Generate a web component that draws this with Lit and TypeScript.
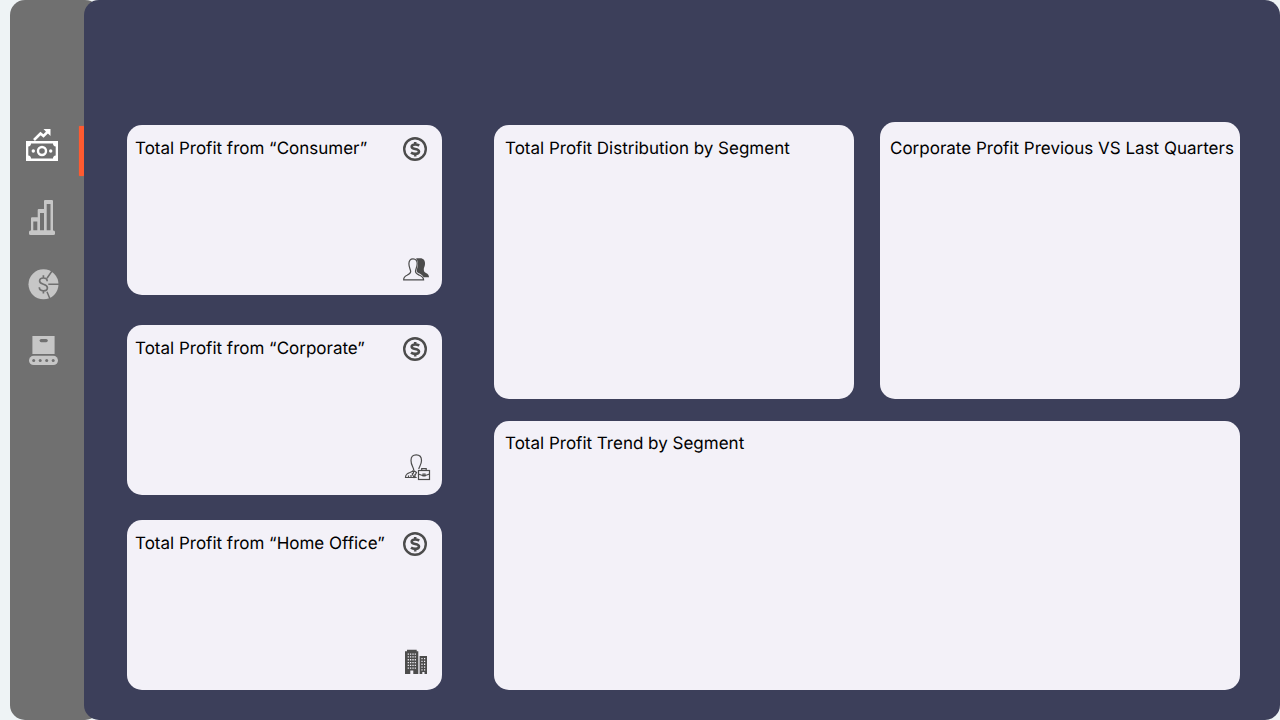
import { LitElement, html, svg, css } from "lit";
import { customElement, property } from "lit/decorators.js";

const money = svg`
  <path d="M9 13 L15.5 6.5 L18.5 9 L23 4.500" fill="none" stroke="currentColor" stroke-width="2.600"/>
  <path d="M18.500 2H25.500V9L23.200 6.800L20.800 4.400Z" fill="currentColor"/>
  <path fill-rule="evenodd" fill="currentColor" d="M1 14H33V34H1ZM6 16.500A3 3 0 0 1 3.300 19.500V28.500A3 3 0 0 1 6 31.500H28A3 3 0 0 1 30.700 28.500V19.500A3 3 0 0 1 28 16.500Z"/>
  <circle cx="17" cy="24" r="4" fill="none" stroke="currentColor" stroke-width="2.400"/>
  <circle cx="8.300" cy="24" r="1.700" fill="currentColor"/><circle cx="25.700" cy="24" r="1.700" fill="currentColor"/>`;

const bars = svg`
  <path fill="currentColor" fill-rule="evenodd" d="M6 32V19.300a1 1 0 0 1 1-1H12.700V11a1 1 0 0 1 1-1H19V2a1 1 0 0 1 1-1H27a1 1 0 0 1 1 1V32ZM8.300 31.500H12.300V22.500H8.300ZM15 31.500H19V14H15ZM21.700 31.500H25.500V5H21.700Z"/>
  <rect x="4" y="31.500" width="26" height="4.500" rx="1.500" fill="currentColor"/>`;

const pie = svg`
  <circle cx="18.500" cy="19.300" r="15" fill="currentColor"/>
  <g fill="none" stroke="#707070" stroke-width="1.500">
    <path d="M22 13.200L27 6M23.300 19.300H34M22 26.800L25 34"/>
    <path stroke-width="1.700" d="M22.200 16.300C22.200 13.800 20.500 13 18.400 13C16.200 13 14.600 14.200 14.600 16C14.600 20.300 22.400 18.200 22.400 22.700C22.400 24.700 20.600 25.800 18.400 25.800C16 25.800 14.400 24.700 14.300 22.300M18.400 10.300V13M18.400 25.800V28.500"/>
  </g>`;

const conveyor = svg`
  <rect x="7.400" y="5" width="22.200" height="18" fill="currentColor"/>
  <rect x="14.600" y="8" width="8.200" height="3.200" rx="1.600" fill="#707070"/>
  <rect x="4" y="24.800" width="29" height="9.200" rx="4.600" fill="currentColor"/>
  <g fill="#707070"><circle cx="8.700" cy="29.400" r="1.500"/><circle cx="15.200" cy="29.400" r="1.500"/><circle cx="21.700" cy="29.400" r="1.500"/><circle cx="28.200" cy="29.400" r="1.500"/></g>`;

const coin = svg`
  <g fill="none" stroke="currentColor">
    <circle cx="13" cy="14" r="10.800" stroke-width="2.400"/>
    <path stroke-width="2.600" d="M17.200 10.600C16 9.700 14.500 9.500 13.200 9.500C11 9.500 9.700 10.400 9.700 11.800C9.700 15 17 13 17 16.500C17 18.200 15.300 18.900 13.200 18.900C11.500 18.900 10.200 18.500 9 17.700M13.200 7V9.700M13.200 18.700V21.500"/>
  </g>`;

const people = svg`
  <path fill="currentColor" d="M13.800 3.700C15.500 3 17 3.300 18.200 3.300C21.500 3.300 23.300 5.700 23 9C22.900 11 22 12.500 21.800 14C21.700 16 22.200 17 24 18C26 19 27 20.500 27 22.300H21.500C20.500 19.500 17 18.500 15.300 17.300C14 16 15.500 13 16 10C16.200 7 15.500 5 13.800 3.700Z"/>
  <path fill="none" stroke="currentColor" stroke-width="1.200" d="M1.700 24.800C1.600 22.500 2.500 21.300 5 20.200C7.500 19 8.800 18.300 8.700 16.500C8.600 14.500 6.900 12.500 6.900 8.800C6.900 5.500 8.500 3.800 11 3.800C13.800 3.800 15.300 5.600 15.200 8.800C15.100 12.300 13.500 14.300 13.500 16.500C13.500 18.500 15 19 17.500 20.200C20.500 21.500 21.500 22.500 21.600 24.800Z"/>`;

const businessman = svg`
  <g fill="none" stroke="currentColor" stroke-width="1.200">
    <path d="M11.700 15.200C11.700 12.500 9 10.500 9 5.500C9 1.500 11 -.200 14.200 -.200C17.400 -.200 19.500 1.500 19.500 5.500C19.500 10 17 11.500 16.800 14"/>
    <path d="M11.500 15.500C9.500 17.500 6 17.500 4.500 19.500C3.700 20.500 3.500 21.500 3.500 22.500H14.700M11.500 15.500V18L10.200 19L12 22.300L14.500 17.500L12 15.800M6.500 22V20.500M9 20V22M13 19V22.500"/>
    <rect x="16.500" y="15.500" width="11" height="9"/>
    <path d="M19.700 15.500V13.600H24.200V15.500M16.300 19L20.500 20.500H23.500L27.500 19M21 19H23V21H21Z"/>
  </g>`;

const offices = svg`
  <path fill="currentColor" d="M3 24V1.300H5V-.300H14.700V1.300H16.300V24H11.300V20.500H8.300V24ZM17.600 24V6H25V24H22.500V22H20.300V24Z"/>
  <g stroke="#f3f1f8" fill="none" stroke-dasharray="1.300 1.500">
    <path stroke-width="1.200" d="M6.300 3.500V19M13.300 3.500V19M20 8V21M22.600 8V21"/>
    <path stroke-width="1.300" d="M8.600 3.500V19M11 3.500V19"/>
  </g>`;

const navItems = [
  { label: "Profit", icon: money },
  { label: "Sales", icon: bars },
  { label: "Segments", icon: pie },
  { label: "Shipping", icon: conveyor },
];

const segments = [
  { name: "Consumer", icon: people },
  { name: "Corporate", icon: businessman },
  { name: "Home Office", icon: offices },
];

@customElement("side-nav")
class SideNav extends LitElement {
  static styles = css`
    :host {
      display: block;
      box-sizing: border-box;
      flex: none;
      width: 90px;
      padding-top: 112px;
      background: #707070;
      border-radius: 15px;
    }
    .link {
      position: relative;
      display: block;
      box-sizing: border-box;
      width: 74px;
      height: 66px;
      padding: 15px 0 0 15px;
      color: #c6c6c6;
    }
    .current {
      height: 72px;
      color: #fff;
    }
    .current::after {
      content: "";
      position: absolute;
      top: 14px;
      right: 0;
      width: 5px;
      height: 50px;
      border-radius: 1px;
      background: #ff5a30;
      box-shadow: 0 0 1px #ff5a30;
    }
    .icon {
      display: block;
      width: 36px;
      height: 36px;
    }
  `;

  render() {
    return html`<nav aria-label="Reports">
      ${navItems.map(
        (item, i) => html`<a class="link ${i === 0 ? "current" : ""}" href="#" aria-label=${item.label}>
          <svg class="icon" viewBox="0 0 36 36" aria-hidden="true">${item.icon}</svg>
        </a>`
      )}
    </nav>`;
  }
}

@customElement("segment-card")
class SegmentCard extends LitElement {
  @property() name = "";
  @property({ attribute: false }) icon: unknown;

  static styles = css`
    :host {
      box-sizing: border-box;
      display: flex;
      flex-direction: column;
      justify-content: space-between;
      min-height: 170px;
      padding: 10px 12px 12px 8px;
      border-radius: 15px;
      background: #f3f1f8;
    }
    .head {
      display: flex;
      justify-content: space-between;
    }
    .title {
      margin: 0;
      padding-top: 2px;
      font-size: 17px;
      line-height: 24px;
      font-weight: 400;
    }
    .icon {
      flex: none;
      width: 28px;
      height: 28px;
      overflow: visible;
      color: #4c4c4c;
    }
    .segment {
      align-self: flex-end;
    }
  `;

  render() {
    return html`
      <div class="head">
        <h2 class="title">Total Profit from “${this.name}”</h2>
        <svg class="icon" viewBox="0 0 28 28" aria-hidden="true">${coin}</svg>
      </div>
      <svg class="icon segment" viewBox="0 0 28 28" aria-hidden="true">${this.icon}</svg>
    `;
  }
}

@customElement("app-root")
class AppRoot extends LitElement {
  static styles = css`
    :host {
      box-sizing: border-box;
      display: flex;
      min-height: 100vh;
      padding-left: 10px;
      background: #eef3f5;
      color: #000;
      font-family: Inter, "Liberation Sans", sans-serif;
      text-rendering: geometricPrecision;
    }
    .board {
      position: relative;
      flex: 1;
      box-sizing: border-box;
      display: grid;
      grid-template-columns: minmax(0, 315fr) minmax(0, 746fr);
      column-gap: 52px;
      margin-left: -16px;
      padding: 125px 40px 30px 43px;
      border-radius: 15px;
      background: #3c3f5a;
    }
    .segments {
      display: grid;
      align-content: space-between;
    }
    .segments > :nth-child(2) {
      margin-top: 30px;
    }
    .segments > :nth-child(3) {
      margin-top: 25px;
    }
    .charts {
      display: grid;
      grid-template-columns: repeat(2, minmax(0, 1fr));
      grid-template-rows: 274fr 269fr;
      gap: 22px 26px;
    }
    .panel {
      box-sizing: border-box;
      padding: 12px 0 12px 11px;
      border-radius: 15px;
      background: #f3f1f8;
    }
    .raised {
      margin-top: -3px;
      padding-top: 15px;
      padding-left: 10px;
    }
    .wide {
      grid-column: span 2;
      padding-top: 11px;
    }
    .title {
      margin: 0;
      font-size: 17px;
      line-height: 24px;
      font-weight: 400;
    }
  `;

  render() {
    return html`
      <side-nav></side-nav>
      <main class="board">
        <div class="segments">
          ${segments.map((s) => html`<segment-card .name=${s.name} .icon=${s.icon}></segment-card>`)}
        </div>
        <div class="charts">
          <section class="panel"><h2 class="title">Total Profit Distribution by Segment</h2></section>
          <section class="panel raised"><h2 class="title">Corporate Profit Previous VS Last Quarters</h2></section>
          <section class="panel wide"><h2 class="title">Total Profit Trend by Segment</h2></section>
        </div>
      </main>
    `;
  }
}
